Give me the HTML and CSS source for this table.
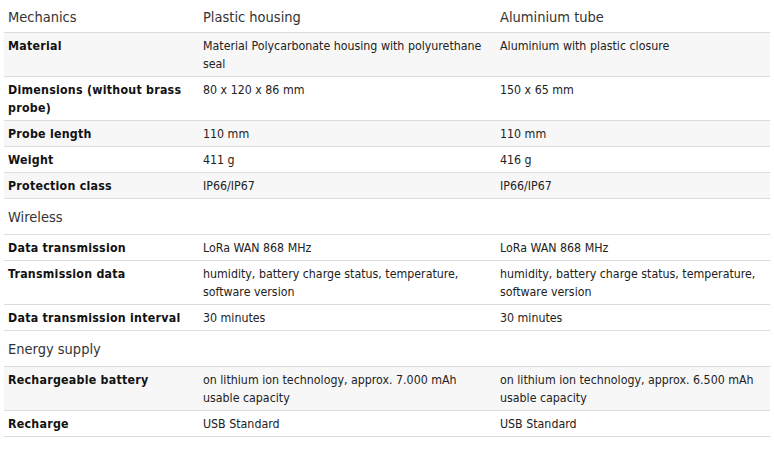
FILE: index.html
```html
<!DOCTYPE html>
<html>
<head>
<meta charset="utf-8">
<link rel="stylesheet" href="styles.css">
</head>
<body>
<table class="spec">
  <colgroup>
    <col class="c1"><col class="c2"><col class="c3">
  </colgroup>
  <tr class="head first"><td>Mechanics</td><td>Plastic housing</td><td>Aluminium tube</td></tr>
  <tr class="alt"><th>Material</th><td>Material Polycarbonate housing with polyurethane seal</td><td>Aluminium with plastic closure</td></tr>
  <tr><th>Dimensions (without brass probe)</th><td>80 x 120 x 86 mm</td><td>150 x 65 mm</td></tr>
  <tr class="alt"><th>Probe length</th><td>110 mm</td><td>110 mm</td></tr>
  <tr><th>Weight</th><td>411 g</td><td>416 g</td></tr>
  <tr class="alt"><th>Protection class</th><td>IP66/IP67</td><td>IP66/IP67</td></tr>
  <tr class="head"><td>Wireless</td><td></td><td></td></tr>
  <tr><th>Data transmission</th><td>LoRa WAN 868 MHz</td><td>LoRa WAN 868 MHz</td></tr>
  <tr><th>Transmission data</th><td>humidity, battery charge status, temperature, software version</td><td>humidity, battery charge status, temperature, software version</td></tr>
  <tr><th>Data transmission interval</th><td>30 minutes</td><td>30 minutes</td></tr>
  <tr class="head"><td>Energy supply</td><td></td><td></td></tr>
  <tr class="alt"><th>Rechargeable battery</th><td>on lithium ion technology, approx. 7.000 mAh usable capacity</td><td>on lithium ion technology, approx. 6.500 mAh usable capacity</td></tr>
  <tr><th>Recharge</th><td>USB Standard</td><td>USB Standard</td></tr>
</table>
</body>
</html>
```
FILE: styles.css
```css
html, body {
  margin: 0;
  padding: 0;
  background: #fff;
}
body {
  font-family: "DejaVu Sans Condensed", "DejaVu Sans", sans-serif;
  font-size: 12.3px;
  color: #222;
}
.spec {
  margin: 0 4px;
  width: 766px;
  border-collapse: collapse;
  table-layout: fixed;
}
.c1 { width: 195px; }
.c2 { width: 297px; }
.c3 { width: 274px; }
.spec th, .spec td {
  text-align: left;
  vertical-align: top;
  padding: 4px 4px 3px 4px;
  line-height: 18px;
  border-bottom: 1px solid #dcdcdc;
}
.spec th {
  font-weight: bold;
  color: #111;
  letter-spacing: 0.25px;
}
.spec tr.alt th, .spec tr.alt td {
  background: #f7f7f7;
}
.spec tr.head td {
  font-size: 14.5px;
  color: #333;
  padding: 9px 4px 8px 4px;
  line-height: 18px;
}
.spec tr.head.first td {
  padding-top: 8px;
  padding-bottom: 6px;
}
```
